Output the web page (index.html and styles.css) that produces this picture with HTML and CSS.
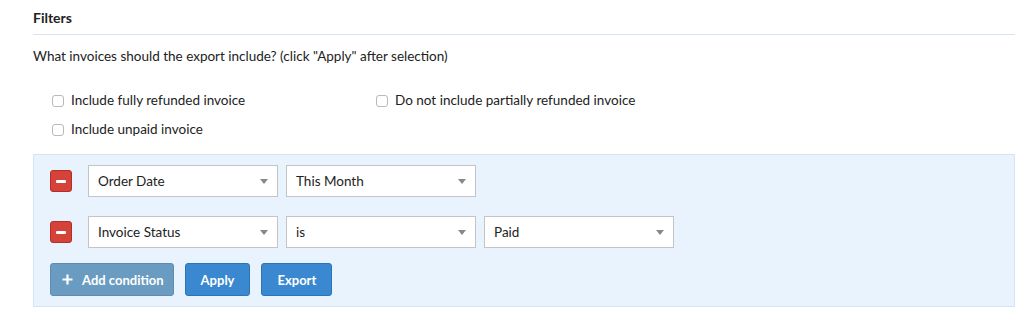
FILE: index.html
```html
<!DOCTYPE html>
<html lang="en">
<head>
    <meta charset="UTF-8">
    <title>Export Invoices - Filters</title>
    <link rel="stylesheet" href="styles.css">
</head>
<body>
    <main class="export-page">
        <h2 class="section-title">Filters</h2>

        <p class="section-intro">What invoices should the export include? (click "Apply" after selection)</p>

        <div class="options">
            <label class="option"><input type="checkbox" class="option-box"> Include fully refunded invoice</label>
            <label class="option"><input type="checkbox" class="option-box"> Do not include partially refunded invoice</label>
            <label class="option"><input type="checkbox" class="option-box"> Include unpaid invoice</label>
        </div>

        <div class="filter-box">
            <div class="condition">
                <button class="remove-btn" title="Remove"><span class="minus"></span></button>
                <div class="select">Order Date<span class="caret"></span></div>
                <div class="select">This Month<span class="caret"></span></div>
            </div>

            <div class="condition">
                <button class="remove-btn" title="Remove"><span class="minus"></span></button>
                <div class="select">Invoice Status<span class="caret"></span></div>
                <div class="select">is<span class="caret"></span></div>
                <div class="select">Paid<span class="caret"></span></div>
            </div>

            <div class="actions">
                <button class="btn btn-muted">
                    <svg class="plus" width="11" height="11" viewBox="0 0 11 11"><path d="M5.5 0.5v10M0.5 5.5h10" stroke="#fff" stroke-width="2.2"/></svg>
                    Add condition
                </button>
                <button class="btn btn-primary">Apply</button>
                <button class="btn btn-primary">Export</button>
            </div>
        </div>
    </main>
</body>
</html>
```

FILE: styles.css
```css
/* Base styles */
* {
    margin: 0;
    padding: 0;
    box-sizing: border-box;
    font-family: 'Lato', 'Noto Sans', sans-serif;
}

body {
    background: #ffffff;
    color: #222;
    font-size: 13.5px;
}

.export-page {
    padding: 8px 9px 0 33px;
}

.section-title {
    font-size: 14px;
    font-weight: 700;
    line-height: 20px;
    padding-bottom: 6px;
    border-bottom: 1px solid #d9e4ef;
}

.section-intro {
    line-height: 20px;
    margin-top: 11px;
}

/* Checkbox options */
.options {
    display: grid;
    grid-template-columns: 324px 1fr;
    row-gap: 10px;
    padding: 25px 0 0 19px;
}

.option {
    display: flex;
    align-items: center;
    gap: 7px;
    line-height: 19px;
}

.option-box {
    appearance: none;
    width: 12px;
    height: 12px;
    border: 1px solid #b9b9b9;
    border-radius: 3px;
    background: #fff;
}

/* Filter conditions */
.filter-box {
    margin-top: 15px;
    background: #e9f3fd;
    border: 1px solid #d3e4f5;
    padding: 10px 16px 10px 16px;
    display: flex;
    flex-direction: column;
    gap: 19px;
}

.actions {
    display: flex;
    gap: 11px;
    margin-top: -4px;
}

.condition {
    display: flex;
    align-items: center;
    gap: 8px;
}

.remove-btn {
    width: 22px;
    height: 22px;
    margin-right: 8px;
    background: #d4423a;
    border: 1px solid #b12f28;
    border-radius: 3px;
    display: flex;
    align-items: center;
    justify-content: center;
}

.minus {
    width: 10px;
    height: 3px;
    background: #fff;
    border-radius: 1px;
}

.select {
    position: relative;
    width: 190px;
    height: 32px;
    padding: 0 9px;
    background: #fff;
    border: 1px solid #c4c4c4;
    line-height: 30px;
    font-size: 13.5px;
    color: #222;
}

.caret {
    position: absolute;
    right: 9px;
    top: 13px;
    border-left: 4px solid transparent;
    border-right: 4px solid transparent;
    border-top: 5px solid #888;
}

.btn {
    height: 33px;
    border-radius: 3px;
    color: #fff;
    font-size: 13px;
    font-weight: 700;
    display: flex;
    align-items: center;
    gap: 9px;
    padding: 0 15px;
}

.btn-muted {
    background: #6a9bc1;
    border: 1px solid #5f8db2;
    padding: 0 9px 0 10px;
}

.btn-primary {
    background: #3a88d0;
    border: 1px solid #2c74b8;
}

.plus {
    margin-left: 1px;
}
```
